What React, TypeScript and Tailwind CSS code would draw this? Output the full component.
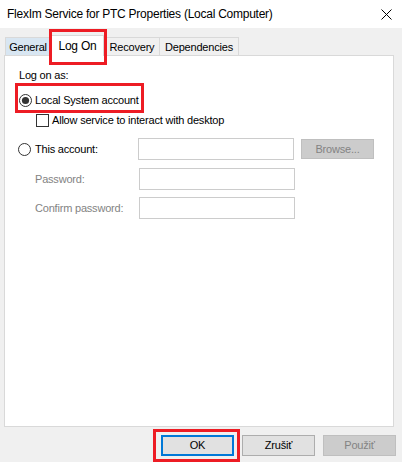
import React from "react";

const RED = "border-[#ed1c24]";

function Radio({ checked, disabled }: { checked?: boolean; disabled?: boolean }) {
  return (
    <svg width="13" height="13" viewBox="0 0 13 13" className="shrink-0">
      <circle cx="6.5" cy="6.5" r="6" fill="#fff" stroke={disabled ? "#bcbcbc" : "#333"} strokeWidth="1" />
      {checked && <circle cx="6.5" cy="6.5" r="3.6" fill="#333" />}
    </svg>
  );
}

function Tab({ label, selected, hover, className = "" }: { label: string; selected?: boolean; hover?: boolean; className?: string }) {
  if (selected) {
    return (
      <div className={`relative top-px z-10 h-[21px] border border-b-0 border-[#d9d9d9] bg-white flex items-center justify-center text-[12px] ${className}`}>
        {label}
        {/* annotation box */}
        <div className={`absolute -left-[3px] -top-[7px] w-[58px] h-[36px] border-[3px] ${RED}`} />
      </div>
    );
  }
  return (
    <div
      className={`h-[18px] border border-b-0 border-[#d9d9d9] flex items-center justify-center pt-[2px] ${
        hover ? "bg-[#d8e6f2]" : "bg-[#f0f0f0]"
      } ${className}`}
    >
      {label}
    </div>
  );
}

function TextBox() {
  return <div className="w-[156px] h-[22px] border border-[#cccccc] bg-white" />;
}

function Button({ label, primary, disabled }: { label: string; primary?: boolean; disabled?: boolean }) {
  return (
    <div
      className={`relative w-[73px] h-[21px] flex items-center justify-center ${
        primary
          ? "border-2 border-[#0078d7] bg-[#e1e1e1]"
          : disabled
          ? "border border-[#bfbfbf] bg-[#cccccc] text-[#838383]"
          : "border border-[#adadad] bg-[#e1e1e1]"
      }`}
    >
      {label}
      {primary && <div className={`absolute -left-[10px] -top-[8px] w-[87px] h-[33px] border-[3px] ${RED}`} />}
    </div>
  );
}

export default function App() {
  return (
    <div className="w-[402px] h-[462px] bg-[#f0f0f0] text-black text-[11px] tracking-[-0.2px] font-['Liberation_Sans',Arial,sans-serif] overflow-hidden">
      {/* Title bar */}
      <div className="h-[28px] bg-white flex items-center justify-between pl-[7px] pr-[10px]">
        <span className="text-[12px] tracking-[-0.25px]">FlexIm Service for PTC Properties (Local Computer)</span>
        <svg width="11" height="11" viewBox="0 0 11 11">
          <path d="M0.5 0.5 L10.5 10.5 M10.5 0.5 L0.5 10.5" stroke="#000" strokeWidth="1" />
        </svg>
      </div>

      {/* Tabs */}
      <div className="mt-[6px] pl-[5px] flex items-end h-[21px]">
        <Tab label="General" hover className="w-[46px]" />
        <Tab label="Log On" selected className="w-[53px]" />
        <Tab label="Recovery" className="w-[56px]" />
        <Tab label="Dependencies" className="w-[80px] -ml-px" />
      </div>

      {/* Panel */}
      <div className="ml-[4px] w-[390px] h-[372px] border border-[#d9d9d9] bg-white pl-[14px] pt-[13px]">
        <div className="h-[13px] leading-[13px]">Log on as:</div>

        <div className="relative mt-[11px] h-[14px] flex items-center gap-[3px]">
          <Radio checked />
          <span>Local System account</span>
          <div className={`absolute -left-[4px] -top-[10px] w-[129px] h-[30px] border-[3px] ${RED}`} />
        </div>

        <div className="mt-[7px] ml-[17px] h-[13px] flex items-center gap-[3px]">
          <div className="w-[13px] h-[13px] border border-[#333] bg-white shrink-0" />
          <span>Allow service to interact with desktop</span>
        </div>

        <div className="mt-[11px] h-[22px] flex items-center">
          <div className="w-[120px] flex items-center gap-[4px] -ml-px">
            <Radio />
            <span>This account:</span>
          </div>
          <TextBox />
          <div className="ml-[7px] w-[73px] h-[20px] border border-[#bfbfbf] bg-[#cccccc] text-[#838383] flex items-center justify-center">
            Browse...
          </div>
        </div>

        <div className="mt-[8px] h-[22px] flex items-center">
          <div className="w-[120px] pl-[16px] text-[#838383]">Password:</div>
          <TextBox />
        </div>

        <div className="mt-[7px] h-[22px] flex items-center">
          <div className="w-[120px] pl-[16px] text-[#838383]">Confirm password:</div>
          <TextBox />
        </div>
      </div>

      {/* Buttons */}
      <div className="mt-[8px] pr-[6px] flex justify-end gap-[8px]">
        <Button label="OK" primary />
        <Button label="Zrušiť" />
        <Button label="Použiť" disabled />
      </div>
    </div>
  );
}
